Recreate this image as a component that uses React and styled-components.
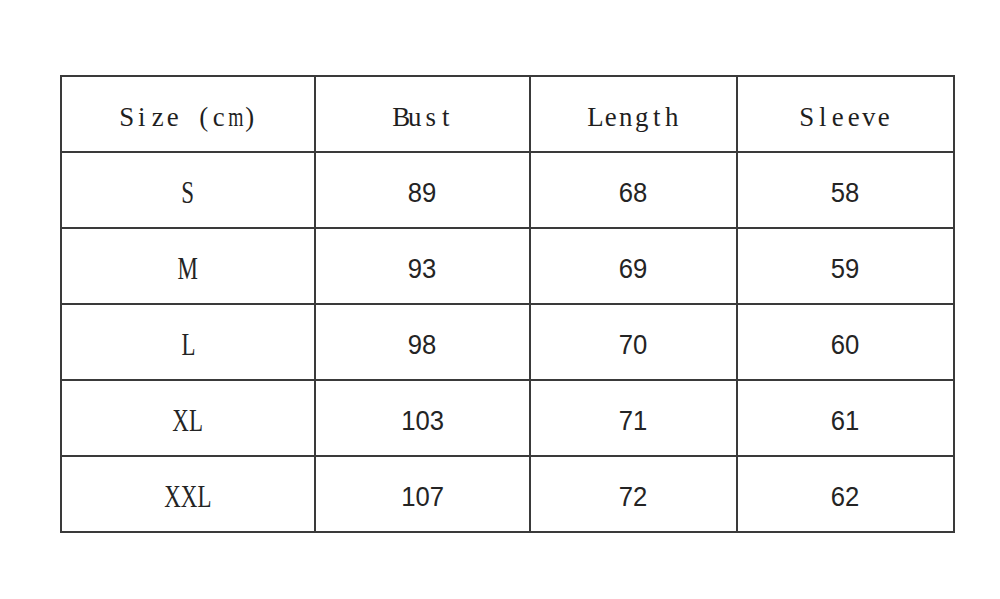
import styled, { createGlobalStyle } from "styled-components";

const GlobalStyle = createGlobalStyle`
  html, body {
    margin: 0;
    padding: 0;
    background: #ffffff;
  }
`;

const Page = styled.div`
  width: 1000px;
  height: 599px;
  padding: 75px 0 0 60px;
  box-sizing: border-box;
  background: #ffffff;
`;

const Grid = styled.div`
  display: inline-grid;
  grid-template-columns: 252px 213px 205px 215px;
  grid-auto-rows: 74px;
  gap: 2px;
  padding: 2px;
  background: #3a3a3a;
`;

const Cell = styled.div`
  display: flex;
  align-items: center;
  justify-content: center;
  background: #ffffff;
  color: #242424;
  padding-top: 6px;
  box-sizing: border-box;
`;

// serif half-width glyphs, one fixed cell per character
const HeadText = styled.span`
  display: inline-flex;
  font-family: "Liberation Serif", "Times New Roman", serif;
  font-size: 28px;
  line-height: 1;
  white-space: pre;
  color: #1f1f1f;
`;

const Glyph = styled.span`
  display: inline-block;
  width: 15.4px;
  text-align: center;
  transform: scaleX(${(props) => (props.wide ? 0.7 : 0.96)});
`;

const SizeText = styled.span`
  font-family: "Liberation Serif", "Times New Roman", serif;
  font-size: 31px;
  display: inline-block;
  transform: scaleX(0.74);
`;

const NumText = styled.span`
  font-family: "Liberation Sans", Arial, sans-serif;
  font-size: 27px;
  display: inline-block;
  transform: scaleX(0.95);
`;

const headers = ["Size (cm)", "Bust", "Length", "Sleeve"];

const rows = [
  ["S", 89, 68, 58],
  ["M", 93, 69, 59],
  ["L", 98, 70, 60],
  ["XL", 103, 71, 61],
  ["XXL", 107, 72, 62],
];

const WIDE = "mwMW";

export default function App() {
  return (
    <>
      <GlobalStyle />
      <Page>
        <Grid>
          {headers.map((h) => (
            <Cell key={h} kind="head">
              <HeadText>
                {h.split("").map((c, i) => (
                  <Glyph key={i} wide={WIDE.includes(c)}>
                    {c}
                  </Glyph>
                ))}
              </HeadText>
            </Cell>
          ))}
          {rows.map((row) => [
            <Cell key={row[0]}>
              <SizeText>{row[0]}</SizeText>
            </Cell>,
            ...row.slice(1).map((v, i) => (
              <Cell key={row[0] + i}>
                <NumText>{v}</NumText>
              </Cell>
            )),
          ])}
        </Grid>
      </Page>
    </>
  );
}
